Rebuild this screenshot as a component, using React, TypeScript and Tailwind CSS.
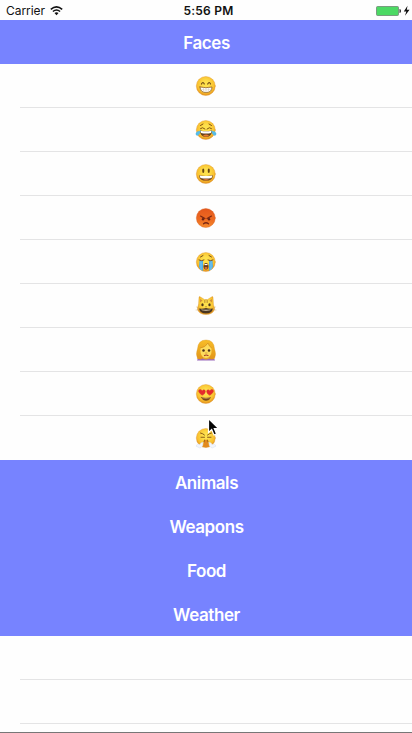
import type { ReactNode } from "react";

function Defs() {
  return (
    <svg className="absolute size-0" aria-hidden="true">
      <defs>
        <radialGradient id="skin" cx="50%" cy="40%" r="60%">
          <stop offset="0.25" stopColor="#fde04c" />
          <stop offset="0.75" stopColor="#f9bf2e" />
          <stop offset="1" stopColor="#e28f1e" />
        </radialGradient>
        <linearGradient id="rage" x1="0" y1="0" x2="0" y2="1">
          <stop offset="0" stopColor="#e4571c" />
          <stop offset="0.6" stopColor="#ee6c22" />
          <stop offset="1" stopColor="#f58a2c" />
        </linearGradient>
        <linearGradient id="hair" x1="0" y1="0" x2="0" y2="1">
          <stop offset="0" stopColor="#f8bd28" />
          <stop offset="1" stopColor="#e29518" />
        </linearGradient>
      </defs>
    </svg>
  );
}

function Emoji({ children }: { children: ReactNode }) {
  return (
    <svg viewBox="0 0 40 40" className="size-5 overflow-visible" fill="none" strokeLinecap="round" strokeLinejoin="round">
      {children}
    </svg>
  );
}

const Face = () => <circle cx="19.600" cy="20" r="19" fill="url(#skin)" stroke="#dd982f" strokeWidth="0.8" />;

const Grin = () => (
  <Emoji>
    <Face />
    <path d="M11 16q3-6 5.500 0M23.500 16q3-6 5.500 0" stroke="#6b4413" strokeWidth="2.4" />
    <path d="M8 22q12 3 24 0q0 11-12 11t-12-11z" fill="#fff" stroke="#8f6022" strokeWidth="1.6" />
    <path d="M9.500 27q10.500 2 21 0M15 23.500v8M20 24v9M25 23.500v8" stroke="#c9bba3" strokeWidth="0.8" />
  </Emoji>
);

const Joy = () => (
  <Emoji>
    <Face />
    <path d="M9 17q4-4 9 1M31 17q-4-4-9 1M9 11l5-3M31 11l-5-3" stroke="#80520f" strokeWidth="2" />
    <path d="M8 21q12 2 24 0q0 13-12 13t-12-13z" fill="#67401a" />
    <path d="M9 21.500q11 2 22 0l-1 4.500q-10 2-20 0z" fill="#fff" />
    <path d="M14 31q6-4 12 0q-6 5-12 0z" fill="#e57831" />
    <path d="M9 22q-7 0-9 4q-1 5 3 5q4-1 6-9zM31 22q7 0 9 4q1 5-3 5q-4-1-6-9z" fill="#55bce9" stroke="#4db0e0" strokeWidth="0.8" />
  </Emoji>
);

const Smile = () => (
  <Emoji>
    <Face />
    <ellipse cx="14.500" cy="13.500" rx="2.1" ry="4.600" fill="#67450f" />
    <ellipse cx="25.500" cy="13.500" rx="2.1" ry="4.600" fill="#67450f" />
    <path d="M6 22.500q14 3 28 0q-1 11-14 11t-14-11z" fill="#70441a" />
    <path d="M7 22.800q13 2.500 26 0l-2 5q-11 2-22 0z" fill="#fff" />
    <path d="M14 31.500q6-3 12 0q-6 3-12 0z" fill="#dd7633" />
  </Emoji>
);

const Angry = () => (
  <Emoji>
    <circle cx="19.600" cy="20" r="19" fill="url(#rage)" stroke="#d65f23" strokeWidth="0.8" />
    <path d="M9 16q5 3 9 5M31 16q-5 3-9 5" stroke="#7d2712" strokeWidth="2.2" />
    <circle cx="14" cy="22.500" r="2.400" fill="#662315" />
    <circle cx="26" cy="22.500" r="2.400" fill="#662315" />
    <path d="M15 31.500q5-4 10 0" stroke="#7b2713" strokeWidth="2.500" />
  </Emoji>
);

const Sob = () => (
  <Emoji>
    <Face />
    <path d="M7 17h7v21l-5-3l-3-5zM26 17h7l1 13l-4 5l-4 3z" fill="#4eaee6" />
    <path d="M10 19v16M30 19v16" stroke="#79c8f2" strokeWidth="2" />
    <path d="M6 16q5 3 10 0M24 16q5 3 10 0M9 10l5-3M31 10l-5-3" stroke="#78501a" strokeWidth="2" />
    <path d="M15 29q0-7 5-7t5 7q0 6-5 6t-5-6z" fill="#69401b" />
    <path d="M17 24h6v2.200h-6z" fill="#fff" />
    <path d="M16.500 32q3.500-4 7 0q-3.500 4-7 0z" fill="#e57037" />
  </Emoji>
);

const Cat = () => (
  <Emoji>
    <path d="M5 18L6 3q0-3 3-1l8 5h6l8-5q3-2 3 1l1 15q3 5 2 9q-4 10-17 10t-17-10q-1-4 2-9z" fill="url(#skin)" stroke="#d99d33" strokeWidth="0.8" />
    <path d="M8 6v7l5-4zM32 6v7l-5-4z" fill="#d2923a" />
    <path d="M17 9v4M20 8v5M23 9v4" stroke="#ad792c" strokeWidth="1.2" />
    <ellipse cx="13" cy="17.500" rx="2.300" ry="3.200" fill="#4e3718" />
    <ellipse cx="27" cy="17.500" rx="2.300" ry="3.200" fill="#4e3718" />
    <path d="M18 21h4l-2 2z" fill="#925022" />
    <path d="M6 25q8 1 14-1q6 2 14 1q-2 10-14 10t-14-10z" fill="#49351f" />
    <path d="M10 27q10 1 20 0l-2 1.500q-8 1.500-16 0z" fill="#e8dbc0" />
    <path d="M1 22l5 2M0 28h6M39 22l-5 2M40 28h-6" stroke="#c9a55f" strokeWidth="0.8" />
  </Emoji>
);

const Woman = () => (
  <Emoji>
    <path d="M2 41q1-5 10-7h16q9 2 10 7z" fill="#9a6abb" />
    <path d="M3 37q-4-10 0-19Q4 0 20 0q16 0 17 18q4 10 0 19q-7 3-12-1H15q-6 4-12 1z" fill="url(#hair)" stroke="#dc9724" strokeWidth="0.8" />
    <path d="M14 31h12v6q-6 4-12 0z" fill="#e6a92c" />
    <path d="M9 16q10-1 15-10q2 7 7 10v8q-1 11-11 12q-10-1-11-12z" fill="#fddb5c" />
    <path d="M9 16q10-1 15-10q2 7 7 10" stroke="#d08d20" strokeWidth="1.4" />
    <circle cx="15" cy="21" r="2.500" fill="#4f3019" />
    <circle cx="26" cy="21" r="2.500" fill="#4f3019" />
    <path d="M19 26h3" stroke="#c68e31" strokeWidth="1.500" />
    <path d="M17 31q3-2 7 0" stroke="#a83d2a" strokeWidth="2.400" />
  </Emoji>
);

const Hearts = () => (
  <Emoji>
    <Face />
    <path d="M12 22.500q-6-4-7-8q0-4 4-3.500q2 0 3.500 3q2-4 5-2q3 3-1 8zM28 22.500q6-4 7-8q0-4-4-3.500q-2 0-3.500 3q-2-4-5-2q-3 3 1 8z" fill="#e62b2d" stroke="#d43427" strokeWidth="0.800" />
    <path d="M11 27q9 3 18 0q-2 6-9 6t-9-6z" fill="#764519" stroke="#764519" />
    <path d="M13 28q7 2 14 0" stroke="#d9bd86" strokeWidth="0.9" />
  </Emoji>
);

const Steam = () => (
  <Emoji>
    <Face />
    <path d="M9 10q5 1 8 4M31 10q-5 1-8 4M10 18.500h7M23 18.500h7" stroke="#8a5c19" strokeWidth="2" />
    <path d="M16 25q4-3 8 0l2 12q-6 3-12 0z" fill="#e28a1e" />
    <path d="M17 24l-1 4M23 24l1 4" stroke="#955915" strokeWidth="1.800" />
    <path d="M14 29q-5-1-6 4q-5-2-7 1q-2 4 3 4q3 3 6 1q4-1 4-10zM26 29q5-1 6 4q5-2 7 1q2 4-3 4q-3 3-6 1q-4-1-4-10z" fill="#f2f5fc" stroke="#ced9ec" strokeWidth="0.8" />
  </Emoji>
);

const faces = [Grin, Joy, Smile, Angry, Sob, Cat, Woman, Hearts, Steam];

function StatusBar() {
  return (
    <div className="grid h-5 grid-cols-[1fr_auto_1fr] items-center text-[12px] leading-5 text-[#111]">
      <div className="flex items-center gap-[5px] pl-1.5">
        <span className="pt-px tracking-[-0.05px]">Carrier</span>
        <svg width="13" height="10" viewBox="0 0 13 10" fill="none" stroke="#111" strokeWidth="1.600">
          <path d="M0.800 3.300Q6.500-1.400 12.200 3.300M2.900 5.500Q6.500 2.500 10.100 5.500" />
          <path d="M4.500 7.100Q6.500 5.600 8.500 7.100L6.500 9.200Z" fill="#111" stroke="none" />
        </svg>
      </div>
      <span className="pt-px pl-[5px] font-semibold tracking-[0.2px]">5:56 PM</span>
      <svg className="mr-[2px] justify-self-end" width="34" height="12" viewBox="0 0 34 12">
        <rect x="0.500" y="1.500" width="22" height="9" rx="1" fill="#4cd964" stroke="#6d8872" strokeWidth="0.800" />
        <path d="M23.500 4q1.500 0 1.500 2t-1.500 2z" fill="#222" />
        <path d="M31.500 0.800L27.800 6.500h2.500L29 10.800l4.500-6h-2.700z" fill="#111" />
      </svg>
    </div>
  );
}

function Header({ title }: { title: string }) {
  return (
    <div className="flex h-11 items-center justify-center bg-[#7783ff] pt-0.5 pl-px text-[17px] font-semibold tracking-[-0.42px] text-white">
      <span className="pt-px">{title}</span>
    </div>
  );
}

export default function App() {
  return (
    <div className="relative flex h-[733px] w-[412px] flex-col overflow-hidden bg-[#fefefe] font-[Inter,'Liberation_Sans',sans-serif]">
      <Defs />
      <StatusBar />
      <Header title="Faces" />
      {faces.map((Icon, i) => (
        <div key={i} className="h-11 pl-5">
          <div className={`flex h-11 items-center justify-center pr-5 ${i < faces.length - 1 ? "border-b border-[#e4e4e5]" : ""}`}>
            <Icon />
          </div>
        </div>
      ))}
      <Header title="Animals" />
      <Header title="Weapons" />
      <Header title="Food" />
      <Header title="Weather" />
      <div className="ml-5 h-11 border-b border-[#e4e4e5]" />
      <div className="ml-5 h-11 border-b border-[#e4e4e5]" />
      <div className="mt-2 h-px bg-[#777]" />
      <svg className="absolute top-[417px] left-[207px]" width="13" height="20" viewBox="0 0 13 20">
        <path d="M1.500 1.500v14l3.200-3 2.300 5.500 2.600-1.100-2.300-5.200h4.300z" fill="#050505" stroke="#fff" strokeWidth="1.200" />
      </svg>
    </div>
  );
}
